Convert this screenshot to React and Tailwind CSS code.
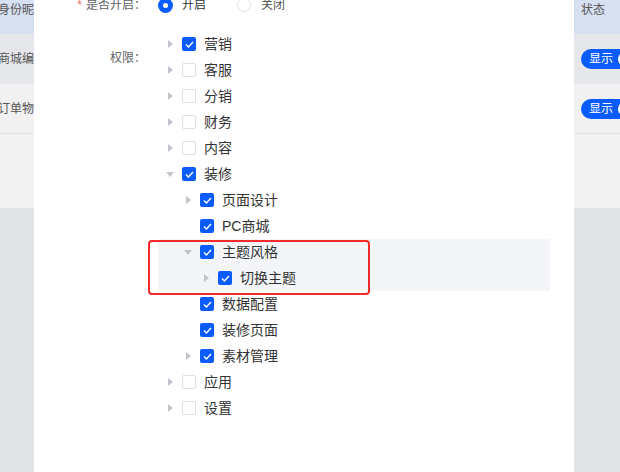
import React from "react";

const BLUE = "bg-[#0b5cff]";

function Caret({ open, show }) {
  return (
    <div className="w-[24px] h-full flex items-center justify-center">
      {show &&
        (open ? (
          <svg width="8" height="5" viewBox="0 0 8 5">
            <path d="M0 0 L8 0 L4 5 Z" fill="#c0c4cc" />
          </svg>
        ) : (
          <svg width="5" height="8" viewBox="0 0 5 8">
            <path d="M0 0 L5 4 L0 8 Z" fill="#c0c4cc" />
          </svg>
        ))}
    </div>
  );
}

function Check({ checked }) {
  return checked ? (
    <div className={`w-[14px] h-[14px] rounded-[2px] ${BLUE} flex items-center justify-center`}>
      <svg width="9" height="7" viewBox="0 0 9 7">
        <path d="M1 3.6 L3.4 6 L8 1" stroke="#fff" strokeWidth="1.4" fill="none" />
      </svg>
    </div>
  ) : (
    <div className="w-[14px] h-[14px] rounded-[2px] border border-[#dcdfe6] bg-white" />
  );
}

function Row({ level, label, checked, caret, open }) {
  const pads = ["pl-0", "pl-[18px]", "pl-[36px]"];
  return (
    <div className={`h-[26px] flex items-center ${pads[level]}`}>
      <Caret show={caret} open={open} />
      <Check checked={checked} />
      <span className="ml-[8px] text-[14px] text-[#333] leading-none">{label}</span>
    </div>
  );
}

function Toggle() {
  return (
    <div className="h-[20px] w-[56px] shrink-0 rounded-full bg-[#0b5cff] flex items-center pl-[8px] text-[12px] text-white whitespace-nowrap">
      <span className="leading-none">显示</span>
      <div className="ml-[5px] w-[14px] h-[14px] shrink-0 rounded-full bg-white" />
    </div>
  );
}

export default function App() {
  return (
    <div
      className="w-[620px] h-[472px] overflow-hidden flex bg-white"
      style={{ fontFamily: '"Liberation Sans", "Noto Sans CJK SC", sans-serif' }}
    >
      {/* left background */}
      <div className="w-[34px] shrink-0 flex flex-col text-[12px] text-[#555] overflow-hidden">
        <div className="h-[34px] bg-[#d6e0f1] pt-[1px] pl-[-2px] whitespace-nowrap leading-[18px]">
          <span className="block ml-[-2px]">身份昵</span>
        </div>
        <div className="h-[50px] bg-[#e6e7eb] flex items-center whitespace-nowrap">
          <span className="ml-[-2px]">商城编</span>
        </div>
        <div className="h-[50px] bg-[#f1f1f1] flex items-center whitespace-nowrap border-b border-[#e2e2e2]">
          <span className="ml-[-2px]">订单物</span>
        </div>
        <div className="h-[74px] bg-[#f2f2f2]" />
        <div className="flex-1 bg-[#e3e4e8]" />
      </div>

      {/* modal */}
      <div className="w-[540px] shrink-0 bg-white flex flex-col">
        <div className="flex items-center h-[22px] mt-[-6px]">
          <div className="w-[112px] text-right text-[12px] text-[#606266] leading-[22px]">
            <span className="text-[#f56c6c] mr-[4px]">*</span>是否开启：
          </div>
          <div className="ml-[12px] flex items-center">
            <div className="w-[15px] h-[15px] rounded-full bg-[#0b5cff] flex items-center justify-center">
              <div className="w-[5px] h-[5px] rounded-full bg-white" />
            </div>
            <span className="ml-[9px] text-[12px] text-[#333]">开启</span>
            <div className="ml-[31px] w-[14px] h-[14px] rounded-full border border-[#dcdfe6]" />
            <span className="ml-[10px] text-[12px] text-[#555]">关闭</span>
          </div>
        </div>

        <div className="flex mt-[15px]">
          <div className="w-[112px] text-right text-[12px] text-[#606266] leading-[22px] mt-[16px]">权限：</div>
          <div className="ml-[12px] w-[392px] flex flex-col">
            <Row level={0} label="营销" checked caret />
            <Row level={0} label="客服" caret />
            <Row level={0} label="分销" caret />
            <Row level={0} label="财务" caret />
            <Row level={0} label="内容" caret />
            <Row level={0} label="装修" checked caret open />
            <Row level={1} label="页面设计" checked caret />
            <Row level={1} label="PC商城" checked />
            <div className="relative bg-[#f4f5f9]">
              <Row level={1} label="主题风格" checked caret open />
              <Row level={2} label="切换主题" checked caret />
              <div className="absolute left-[-10px] top-[1px] w-[222px] h-[55px] border-[2.5px] border-[#f52a2a] rounded-[4px]" />
            </div>
            <Row level={1} label="数据配置" checked />
            <Row level={1} label="装修页面" checked />
            <Row level={1} label="素材管理" checked caret />
            <Row level={0} label="应用" caret />
            <Row level={0} label="设置" caret />
          </div>
        </div>
      </div>

      {/* right background */}
      <div className="w-[46px] shrink-0 flex flex-col text-[12px] text-[#555] overflow-hidden">
        <div className="h-[34px] bg-[#d6e0f1] pt-[1px] pl-[7px] whitespace-nowrap leading-[18px]">状态</div>
        <div className="h-[50px] bg-[#e6e7eb] flex items-center pl-[7px]">
          <Toggle />
        </div>
        <div className="h-[50px] bg-[#f1f1f1] flex items-center pl-[7px] border-b border-[#e2e2e2]">
          <Toggle />
        </div>
        <div className="h-[74px] bg-[#f2f2f2]" />
        <div className="flex-1 bg-[#e3e4e8]" />
      </div>
    </div>
  );
}
